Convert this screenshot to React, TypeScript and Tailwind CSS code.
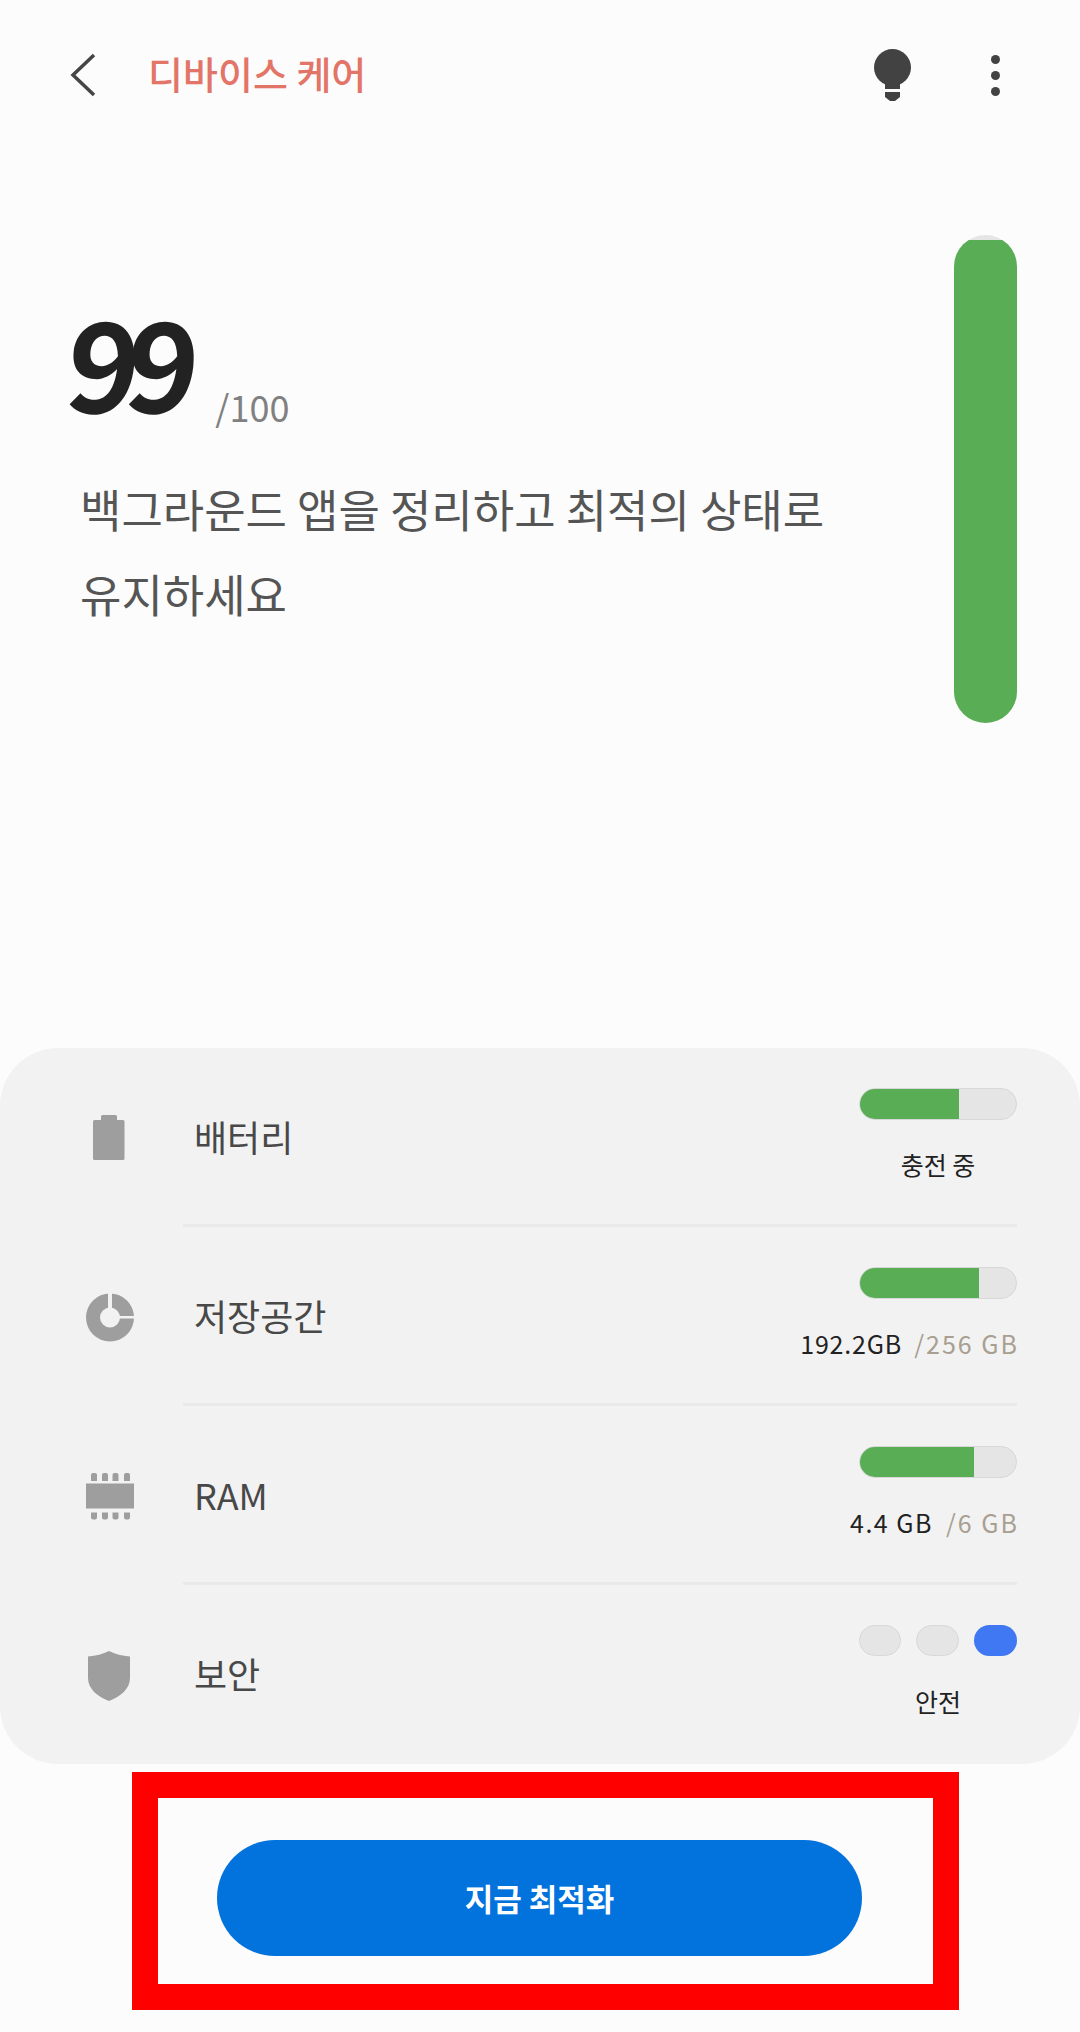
const sans = "font-['Noto_Sans_CJK_KR','Noto_Sans',sans-serif]";

function Bar({ used }: { used: number }) {
  return (
    <div className="h-[32px] w-[158px] overflow-hidden rounded-full border border-[#d8d8d8] bg-[#e5e5e5]">
      <div className="-m-px h-[32px] bg-[#59ad55]" style={{ width: used }} />
    </div>
  );
}

function SecurityDots() {
  return (
    <div className="flex h-[32px] w-[158px] gap-[15px]">
      <div className="h-[31px] w-[42px] rounded-full border border-[#d8d8d8] bg-[#e5e5e5]" />
      <div className="h-[31px] w-[43px] rounded-full border border-[#d8d8d8] bg-[#e5e5e5]" />
      <div className="h-[31px] w-[43px] rounded-full bg-[#3f78f2]" />
    </div>
  );
}

function BatteryIcon() {
  return (
    <svg width="48" height="48" viewBox="0 0 48 48" fill="#9e9e9e">
      <path d="M15 1.500a1.500 1.500 0 0 1 1.500-1.500h13a1.500 1.500 0 0 1 1.500 1.500V5h6a1.500 1.500 0 0 1 1.500 1.500v37a1.500 1.500 0 0 1-1.500 1.500H8.500A1.500 1.500 0 0 1 7 43.500v-37A1.500 1.500 0 0 1 8.500 5H15z" />
    </svg>
  );
}

function StorageIcon() {
  return (
    <svg width="48" height="50" viewBox="0 -1 48 50" fill="#9e9e9e">
      <path fillRule="evenodd" d="M24 -0.500a24 24 0 1 0 0 48a24 24 0 1 0 0-48zM24 13.500a10 10 0 1 1 0 20a10 10 0 1 1 0-20z" />
      <rect x="22" y="-1" width="4" height="15" fill="#f2f2f2" />
      <rect x="33" y="22" width="15" height="2.500" fill="#f2f2f2" />
    </svg>
  );
}

function RamIcon() {
  return (
    <svg width="48" height="48" viewBox="0 0 48 48" fill="#9e9e9e">
      <rect x="0" y="10.500" width="48" height="25" />
      {[5, 16, 26.500, 38].map((x) => (
        <g key={x}>
          <path d={`M${x} 8V2a2 2 0 0 1 2-2h2a2 2 0 0 1 2 2V8z`} />
          <path d={`M${x} 39.500v5a2 2 0 0 0 2 2h2a2 2 0 0 0 2-2v-5z`} />
        </g>
      ))}
    </svg>
  );
}

function ShieldIcon() {
  return (
    <svg width="48" height="50" viewBox="0 0 48 50" fill="#9e9e9e">
      <path d="M23 0c6 3 13 5 21 5.500V27c0 11-10 19-21 23C12 46 2 38 2 27V5.500C10 5 17 3 23 0z" />
    </svg>
  );
}

function Row({
  icon,
  label,
  right,
  last,
}: {
  icon: React.ReactNode;
  label: string;
  right: React.ReactNode;
  last?: boolean;
}) {
  return (
    <div className="flex h-[179px] pl-[86px] pr-[63px]">
      <div className="flex w-[48px] shrink-0 items-center pt-[2px]">{icon}</div>
      <div className={`ml-[49px] flex flex-1 justify-between pt-[40px] ${last ? "" : "border-b-[3px] border-[#e9e9e9]"}`}>
        <div className="pl-[11px] pt-[23px] text-[36px] leading-[50px] text-[#484848]">{label}</div>
        <div className="flex flex-col items-end">{right}</div>
      </div>
    </div>
  );
}

export default function App() {
  return (
    <div className={`${sans} flex h-[2032px] w-[1080px] flex-col overflow-hidden bg-[#fcfcfc]`}>
      {/* Header */}
      <div className="flex h-[150px] items-center pl-[70px] pr-[80px]">
        <svg width="26" height="44" viewBox="0 0 26 44" fill="none" stroke="#454545" strokeWidth="3.500">
          <path d="M24 2L3 22l21 20" />
        </svg>
        <div className="mb-[5px] ml-[52px] text-[38px] font-medium text-[#e27568]">디바이스 케어</div>
        <svg className="ml-auto" width="37" height="52" viewBox="0 0 37 52" fill="#424242">
          <circle cx="18.500" cy="18.500" r="18.500" />
          <path d="M11 30h15v10H11z" />
          <path d="M11 43h15v5l-5 4h-5l-5-4z" />
        </svg>
        <div className="ml-[80px] flex flex-col gap-[7px]">
          <div className="h-[9px] w-[9px] rounded-full bg-[#424242]" />
          <div className="h-[9px] w-[9px] rounded-full bg-[#424242]" />
          <div className="h-[9px] w-[9px] rounded-full bg-[#424242]" />
        </div>
      </div>

      {/* Score */}
      <div className="flex h-[898px] pl-[68px] pr-[63px] pt-[68px]">
        <div className="flex-1">
          <div className="flex h-[210px] items-end">
            <span className="mb-[-6px] skew-x-[-6deg] text-[124px] font-bold leading-[150px] tracking-[-14px] text-[#222222]">99</span>
            <span className="ml-[29px] text-[36px] leading-[44px] text-[#808080]">/100</span>
          </div>
          <div className="mt-[38px] pl-[12px] text-[45px] leading-[85px] text-[#555555]">
            <div>백그라운드 앱을 정리하고 최적의 상태로</div>
            <div>유지하세요</div>
          </div>
        </div>
        <div className="mt-[17px] flex h-[488px] w-[63px] flex-col justify-end overflow-hidden rounded-full bg-[#e5e5e5]">
          <div className="h-[483px] bg-[#59ad55]" />
        </div>
      </div>

      {/* Status panel */}
      <div className="h-[716px] rounded-[58px] bg-[#f2f2f2]">
        <Row
          icon={<BatteryIcon />}
          label="배터리"
          right={
            <>
              <Bar used={100} />
              <div className="w-[158px] pt-[26px] text-center text-[25px] leading-[36px] text-[#222222]">충전 중</div>
            </>
          }
        />
        <Row
          icon={<StorageIcon />}
          label="저장공간"
          right={
            <>
              <Bar used={120} />
              <div className="whitespace-nowrap pt-[26px] text-[25px] leading-[36px] tracking-[0.800px] text-[#222222]">
                192.2GB <span className="ml-[6px] mr-[-2px] tracking-[2px] text-[#a89f91]">/256 GB</span>
              </div>
            </>
          }
        />
        <Row
          icon={<RamIcon />}
          label="RAM"
          right={
            <>
              <Bar used={115} />
              <div className="whitespace-nowrap pt-[26px] text-[25px] leading-[36px] tracking-[1.500px] text-[#222222]">
                4.4 GB <span className="ml-[6px] mr-[-2px] tracking-[2px] text-[#a89f91]">/6 GB</span>
              </div>
            </>
          }
        />
        <Row
          last
          icon={<ShieldIcon />}
          label="보안"
          right={
            <>
              <SecurityDots />
              <div className="w-[158px] pt-[26px] text-center text-[25px] leading-[36px] text-[#222222]">안전</div>
            </>
          }
        />
      </div>

      {/* Action, boxed in red */}
      <div className="ml-[132px] mt-[8px] h-[238px] w-[827px] border-[26px] border-[#ff0000] pl-[59px] pt-[42px]">
        <button className="h-[116px] w-[645px] rounded-full bg-[#0272dd] text-[31px] font-bold text-white">
          지금 최적화
        </button>
      </div>
    </div>
  );
}
